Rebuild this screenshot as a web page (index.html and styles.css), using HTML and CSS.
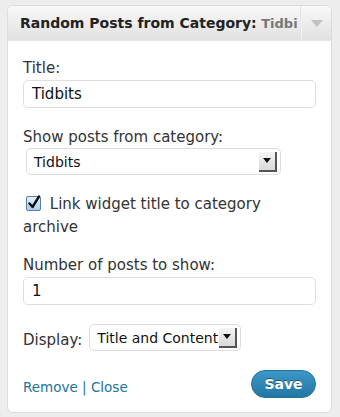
FILE: index.html
```html
<!DOCTYPE html>
<html lang="en">
<head>
  <meta charset="utf-8">
  <title>Random Posts from Category</title>
  <link rel="stylesheet" href="styles.css">
</head>
<body>
  <div class="widget">
    <div class="widget-top">
      <div class="widget-title">Random Posts from Category:<span class="in-widget-title"> Tidbi</span></div>
      <div class="widget-toggle"><span class="arrow"></span></div>
    </div>
    <div class="widget-inside">
      <label class="label label-title" for="title">Title:</label>
      <input class="text" id="title" type="text" value="Tidbits">

      <div class="label label-cat">Show posts from category:</div>
      <div class="select select-cat">
        <span class="select-value">Tidbits</span>
        <span class="select-arrow"></span>
      </div>

      <div class="check-row">
        <svg class="check" width="16" height="16" viewBox="0 0 16 16">
          <defs>
            <linearGradient id="cb" x1="0" y1="0" x2="0" y2="1">
              <stop offset="0" stop-color="#eaf3fc"/>
              <stop offset="1" stop-color="#a9cbee"/>
            </linearGradient>
          </defs>
          <rect x="0.5" y="1.5" width="14" height="14" rx="1.5" fill="url(#cb)" stroke="#5a7fa8"/>
          <path d="M3.5 8.5 L6.5 12 L13 1.5" fill="none" stroke="#111" stroke-width="2.4" stroke-linecap="round" stroke-linejoin="round"/>
        </svg>
        Link widget title to category archive
      </div>

      <label class="label label-num" for="num">Number of posts to show:</label>
      <input class="text" id="num" type="text" value="1">

      <div class="display-row">
        <span class="label">Display:</span>
        <div class="select select-display">
          <span class="select-value">Title and Content</span>
          <span class="select-arrow"></span>
        </div>
      </div>

      <div class="widget-control-actions">
        <div class="links"><a href="#">Remove</a> | <a href="#">Close</a></div>
        <div class="button-primary">Save</div>
      </div>
    </div>
  </div>
</body>
</html>
```

FILE: styles.css
```css
body {
  margin: 0;
  padding: 5px 8px 0 7px;
  background: #ededed;
  font-family: "DejaVu Sans", sans-serif;
  font-size: 15px;
  color: #333;
}

.widget {
  width: 323px;
  border: 1px solid #dcdcdc;
  border-radius: 6px;
  background: #fff;
  overflow: hidden;
}

.widget-top {
  display: flex;
  height: 34px;
  background: linear-gradient(#f8f8f8, #e1e1e1);
}

.widget-title {
  flex: 1;
  overflow: hidden;
  white-space: nowrap;
  padding-left: 12px;
  font-size: 14px;
  font-weight: bold;
  line-height: 34px;
  color: #222;
}

.in-widget-title {
  font-size: 13px;
  color: #777;
}

.widget-toggle {
  width: 29px;
  border-left: 1px solid #f3f3f3;
  box-shadow: -1px 0 0 #e4e4e4;
  display: flex;
  align-items: center;
  justify-content: center;
}

.arrow {
  width: 0;
  height: 0;
  margin-left: 1px;
  border-left: 6px solid transparent;
  border-right: 6px solid transparent;
  border-top: 7px solid #c2c2c2;
}

.widget-inside {
  padding: 18px 15px 14px 15px;
  border-top: 1px solid #e6e6e6;
}

.label {
  display: block;
  line-height: 18px;
}

.text {
  display: block;
  box-sizing: border-box;
  width: 293px;
  height: 28px;
  margin: 3px 0 0 0;
  padding: 0 8px;
  border: 1px solid #dfdfdf;
  border-radius: 5px;
  font-family: inherit;
  font-size: 15px;
  color: #111;
}

.label-cat {
  margin-top: 20px;
}

.select {
  display: flex;
  align-items: center;
  box-sizing: border-box;
  height: 27px;
  padding: 0 3px 0 7px;
  border: 1px solid #dcdcdc;
  border-radius: 5px;
  background: #fff;
  font-size: 14px;
  color: #111;
}

.select-cat {
  width: 255px;
  margin: 2px 0 0 3px;
}

.select-value {
  flex: 1;
  white-space: nowrap;
}

.select-arrow {
  box-sizing: border-box;
  width: 18px;
  height: 20px;
  background: linear-gradient(#f4f4f4, #dadada);
  border-right: 2px solid #555;
  border-bottom: 2px solid #555;
  display: flex;
  align-items: center;
  justify-content: center;
}

.select-arrow::after {
  content: "";
  width: 0;
  height: 0;
  border-left: 4px solid transparent;
  border-right: 4px solid transparent;
  border-top: 5px solid #111;
}

.check-row {
  margin-top: 18px;
  line-height: 23px;
}

.check {
  vertical-align: -2px;
  margin: 0 3px 0 3px;
}

.label-num {
  margin-top: 17px;
}

.display-row {
  display: flex;
  align-items: flex-end;
  margin-top: 19px;
}

.display-row .label {
  margin: 0 7px 2px 0;
}

.select-display {
  width: 152px;
  padding-left: 7px;
}

.widget-control-actions {
  display: flex;
  justify-content: space-between;
  align-items: flex-end;
  margin-top: 19px;
}

.links {
  font-size: 13.5px;
  line-height: 18px;
  margin-bottom: 2px;
  color: #21759b;
}

.links a {
  color: #21759b;
  text-decoration: none;
}

.button-primary {
  box-sizing: border-box;
  width: 65px;
  height: 28px;
  border: 1px solid #21719a;
  border-radius: 14px;
  background: linear-gradient(#3b98c8, #2477a3);
  color: #fff;
  font-size: 14px;
  font-weight: bold;
  line-height: 26px;
  text-align: center;
  text-shadow: 0 -1px 0 rgba(0, 0, 0, 0.35);
}
```
